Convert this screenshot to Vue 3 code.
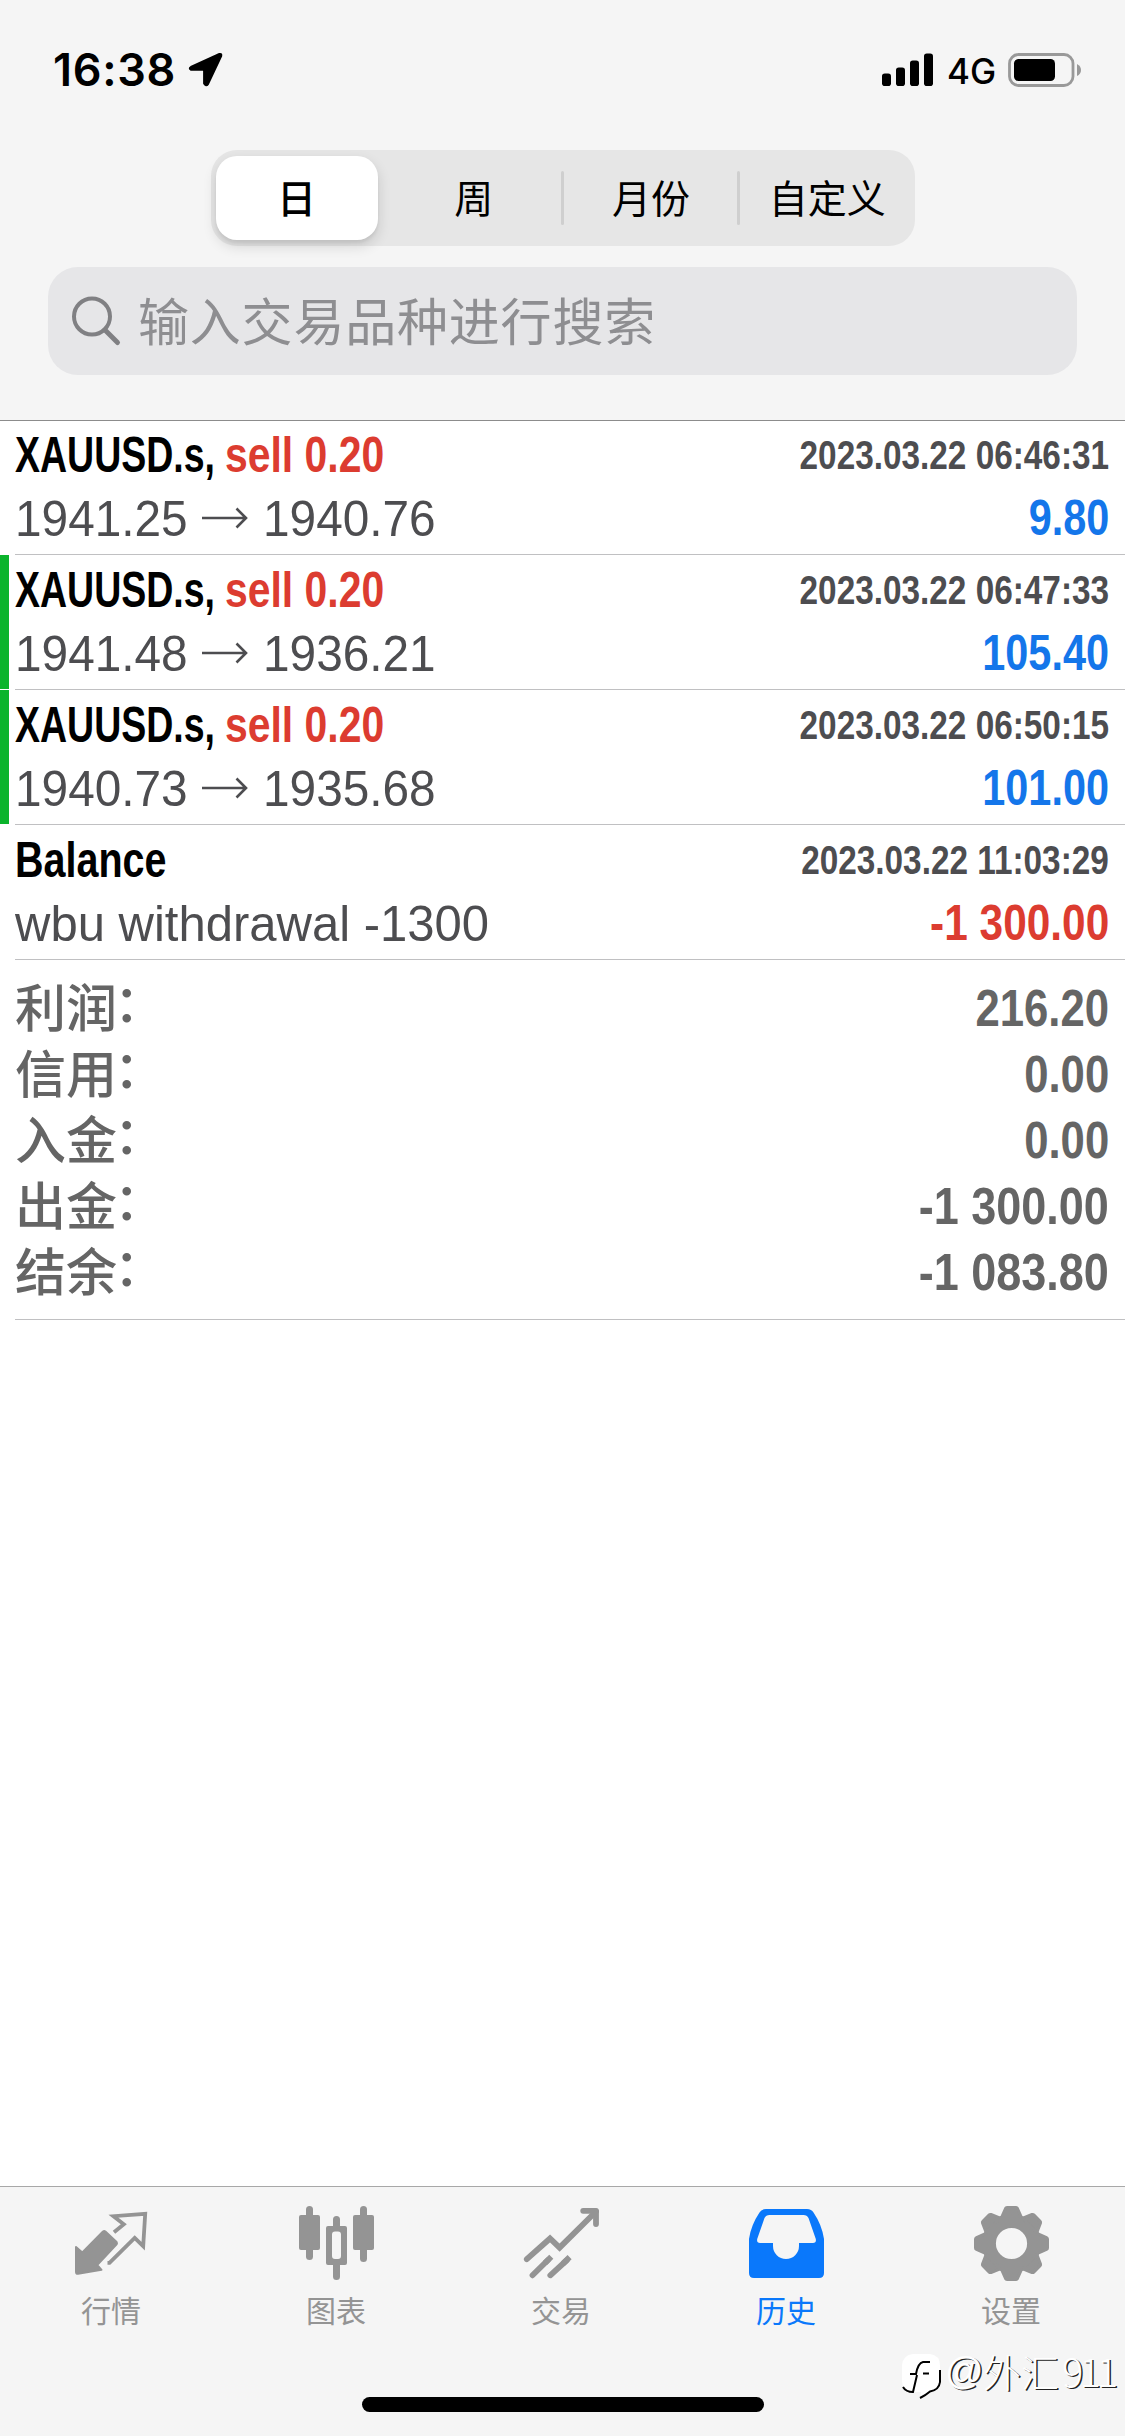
<script setup>
const periods = ['日', '周', '月份', '自定义']

const deals = [
  { name: 'XAUUSD.s,', side: 'sell 0.20', open: '1941.25', close: '1940.76', time: '2023.03.22 06:46:31', profit: '9.80' },
  { name: 'XAUUSD.s,', side: 'sell 0.20', open: '1941.48', close: '1936.21', time: '2023.03.22 06:47:33', profit: '105.40', marked: true },
  { name: 'XAUUSD.s,', side: 'sell 0.20', open: '1940.73', close: '1935.68', time: '2023.03.22 06:50:15', profit: '101.00', marked: true },
  { name: 'Balance', note: 'wbu withdrawal -1300', time: '2023.03.22 11:03:29', profit: '-1 300.00', loss: true },
]

const totals = [
  { label: '利润', sum: '216.20' },
  { label: '信用', sum: '0.00' },
  { label: '入金', sum: '0.00' },
  { label: '出金', sum: '-1 300.00', negative: true },
  { label: '结余', sum: '-1 083.80', negative: true },
]

const teeth = [0, 45, 90, 135, 180, 225, 270, 315]
</script>

<template>
  <div class="screen">
    <header class="top">
      <div class="status">
        <span class="clock">16:38</span>
        <svg class="location" width="36" height="36" viewBox="0 0 36 36">
          <path d="M31.5 2.2 L3 15.2 Q1 16.3 3 17.6 H16.3 V31.5 Q18 34.5 19.8 32 L33 4 Q33.6 1.6 31.5 2.2Z" fill="#000" stroke="#000" stroke-width="2.4" stroke-linejoin="round" />
        </svg>
        <span class="grow"></span>
        <svg width="52" height="34" viewBox="0 0 52 34">
          <rect x="0" y="20.5" width="9" height="12.5" rx="2.8" />
          <rect x="14" y="14.5" width="9" height="18.5" rx="2.8" />
          <rect x="28" y="7.5" width="9" height="25.5" rx="2.8" />
          <rect x="42" y="0.5" width="9" height="32.5" rx="2.8" />
        </svg>
        <span class="network">4G</span>
        <svg width="74" height="34" viewBox="0 0 74 34">
          <rect x="1.5" y="1.5" width="63.5" height="31" rx="9" fill="none" stroke="#999" stroke-width="2.8" />
          <rect x="6" y="6" width="41" height="22" rx="4.5" />
          <path d="M69 11 Q73 13 73 17 T69 23Z" fill="#999" />
        </svg>
      </div>

      <div class="segments">
        <div v-for="(p, i) in periods" :key="p" class="segment" :class="{ active: i === 0, ruled: i > 1 }">
          <span>{{ p }}</span>
        </div>
      </div>

      <div class="search">
        <svg width="52" height="52" viewBox="0 0 52 52" fill="none" stroke="#808083" stroke-linecap="round">
          <circle cx="20" cy="21.5" r="18" stroke-width="4" />
          <path d="M33 35 L45.500 47.500" stroke-width="5" />
        </svg>
        <span>输入交易品种进行搜索</span>
      </div>
    </header>

    <main class="list">
      <article v-for="d in deals" :key="d.time" class="deal" :class="{ marked: d.marked }">
        <div class="line first">
          <span class="name" :class="{ word: d.note }">{{ d.name }}</span>
          <span v-if="d.side" class="side">{{ d.side }}</span>
          <span class="grow"></span>
          <span class="time">{{ d.time }}</span>
        </div>
        <div class="line second">
          <span v-if="d.note" class="note">{{ d.note }}</span>
          <template v-else>
            <span class="price">{{ d.open }}</span>
            <svg class="arrow" width="48" height="24" viewBox="0 0 48 24" fill="none" stroke="#4d4d50" stroke-width="2.6">
              <path d="M1 12 H45 M35.5 2.5 L45 12 L35.5 21.5" />
            </svg>
            <span class="price">{{ d.close }}</span>
          </template>
          <span class="grow"></span>
          <span class="profit" :class="{ loss: d.loss }">{{ d.profit }}</span>
        </div>
      </article>

      <section class="totals">
        <div v-for="t in totals" :key="t.label" class="total">
          <span class="label">{{ t.label }}<span class="colon">：</span></span>
          <span class="sum" :class="{ negative: t.negative }">{{ t.sum }}</span>
        </div>
      </section>
    </main>

    <nav class="tabs">
      <div class="tab">
        <svg width="225" height="90" viewBox="0 0 225 90">
          <path d="M76 47 L82.3 52.5 L103 31.5 Q104.2 30.6 105.4 31.5 L116.6 42 Q117.4 43.2 116.6 44.4 L97.2 65 L101.5 69.8 L78 73.8 Q76 74 76 72Z" fill="currentColor" stroke="currentColor" stroke-width="2" stroke-linejoin="round" />
          <path d="M114 32.3 L123.8 24.2 L113.5 16.2 L145.2 13.8 L143.2 46.2 L134.7 37.8 L109.5 62.8 L107.5 62.8" fill="none" stroke="currentColor" stroke-width="3.8" />
        </svg>
        <span>行情</span>
      </div>
      <div class="tab">
        <svg width="225" height="90" viewBox="0 0 225 90" fill="currentColor">
          <rect x="74" y="15" width="21" height="35" rx="2" />
          <rect x="81" y="6" width="7" height="54" rx="3.5" />
          <path fill-rule="evenodd" d="M103 26 H120 Q122 26 122 28 V63 Q122 65 120 65 H103 Q101 65 101 63 V28 Q101 26 103 26Z M110 31.5 Q107 31.5 107 34.5 V56 Q107 59 110 59 H113 Q116 59 116 56 V34.5 Q116 31.5 113 31.5Z" />
          <path d="M108 27 V19.5 a3.5 3.5 0 0 1 7 0 V27Z M108 64 V76.5 a3.5 3.5 0 0 0 7 0 V64Z" />
          <rect x="128" y="15" width="21" height="35" rx="2" />
          <rect x="135" y="6" width="7" height="56" rx="3.5" />
        </svg>
        <span>图表</span>
      </div>
      <div class="tab">
        <svg width="225" height="90" viewBox="0 0 225 90" fill="none" stroke="currentColor" stroke-width="5.8">
          <path d="M76.8 59.2 L100 38.5 L109.6 47.6 L146 11.5" stroke-linecap="round" />
          <path d="M133.2 10.8 H146 V24" stroke-linecap="round" stroke-linejoin="round" />
          <path d="M82.5 75.3 L98 60 M100.3 75.3 L117 60" stroke-linecap="round" />
          <path d="M95 63 L101.3 56.7 M113 63.6 L119.6 57.2" />
        </svg>
        <span>交易</span>
      </div>
      <div class="tab current">
        <svg width="225" height="90" viewBox="0 0 225 90" fill="currentColor">
          <path fill-rule="evenodd" d="M91 9 H132 Q136.500 9 138.500 12.500 Q147 25 149 39 V73 Q149 78 144 78 H79 Q74 78 74 73 V39 Q76 25 84.500 12.500 Q86.500 9 91 9Z M94.500 15 Q91 15 89.500 18 L82.200 39 Q81.500 43 85 43 H98 V46 A13 13 0 0 0 124 46 V43 H138 Q141.500 43 140.800 39 L133.500 18 Q132 15 128.500 15Z" />
        </svg>
        <span>历史</span>
      </div>
      <div class="tab">
        <svg width="225" height="90" viewBox="0 0 225 90">
          <g transform="translate(111.500 43.500)" fill="currentColor" stroke="currentColor">
            <circle r="22.500" fill="none" stroke-width="13.800" />
            <path v-for="a in teeth" :key="a" d="M-10 -26 L-6 -35 Q-5.500 -36 -4.500 -36 H4.500 Q5.500 -36 6 -35 L10 -26Z" stroke-width="3" stroke-linejoin="round" :transform="`rotate(${a})`" />
          </g>
        </svg>
        <span>设置</span>
      </div>
      <div class="home"></div>
      <div class="credit">
        <svg width="44" height="48" viewBox="0 0 44 48">
          <path d="M12 1 H29 Q39 2 39 13 V29 Q39 38 30 38 L19 45 L20 39 H12 Q1 38 1 28 V12 Q2 2 12 1Z" fill="#fff" />
          <path d="M39 17 V29 Q38 37 29 38.500 Q25 42 19 45 M2 34 Q5 39 12 39 L16 22 M9 21 H15 Q17 10 22 9 H29 M22 20.500 H28" fill="none" stroke="#000" stroke-width="2" />
        </svg>
        <span class="at">@</span><span class="han">外汇</span><span class="num">911</span>
      </div>
    </nav>
  </div>
</template>

<style>
body {
  background: #fff;
}
</style>

<style scoped>
.screen {
  width: 1125px;
  height: 2436px;
  display: flex;
  flex-direction: column;
  background: #fff;
  font-family: "Liberation Sans", "Noto Sans CJK SC", sans-serif;
  overflow: hidden;
}
.grow {
  flex: 1;
}
.top {
  height: 420px;
  flex: none;
  background: #f5f5f5;
  box-shadow: 0 1px 0 #8c8c8c;
  z-index: 1;
}
.status {
  height: 150px;
  box-sizing: border-box;
  padding: 53px 43px 63px 53px;
  display: flex;
  align-items: center;
}
.clock {
  font: 600 45px/34px Inter, sans-serif;
  letter-spacing: 0.7px;
  width: 135px;
  white-space: nowrap;
}
.network {
  font: 500 35px/34px Inter, sans-serif;
  width: 61px;
  margin-left: 13px;
  padding-top: 2px;
  box-sizing: border-box;
}
.segments {
  width: 704px;
  height: 96px;
  margin-left: 210.5px;
  border-radius: 26px;
  background: #e6e6e6;
  display: flex;
}
.segment {
  flex: 1;
  display: flex;
  align-items: center;
  justify-content: center;
  font: 400 39px/60px "Noto Sans CJK SC", sans-serif;
  color: #000;
}
.segment span {
  flex: 1;
  text-align: center;
  margin-top: -4px;
}
.segment.ruled::before {
  content: "";
  width: 3px;
  height: 54px;
  margin-left: -1px;
  border-radius: 2px;
  background: #cfcfcf;
}
.segment.active {
  flex: none;
  width: 162px;
  height: 84px;
  margin: 6px 8px 6px 5px;
  border-radius: 21px;
  background: #fff;
  box-shadow: 0 6px 14px rgba(0, 0, 0, 0.14), 0 3px 3px rgba(0, 0, 0, 0.05);
  font-weight: 500;
}
.search {
  margin: 21px 48px 0 48px;
  height: 108px;
  border-radius: 30px;
  background: #e6e6e8;
  display: flex;
  align-items: center;
  padding-left: 24px;
  color: #8e8e91;
  font: 400 51px/76px "Noto Sans CJK SC", sans-serif;
  letter-spacing: 0.8px;
}
.search span {
  margin: -4px 0 0 14px;
}
.deal {
  height: 135px;
  box-sizing: border-box;
  padding: 4px 16px 0 15px;
  position: relative;
}
.deal::after,
.totals::after {
  content: "";
  position: absolute;
  left: 15px;
  right: 0;
  bottom: 0;
  height: 1px;
  background: #c0c0c2;
}
.deal.marked {
  background: linear-gradient(#0bb42c, #0bb42c) 0 0 / 9px 134px no-repeat;
}
.line {
  display: flex;
  align-items: center;
  white-space: nowrap;
}
.first {
  height: 62px;
}
.second {
  height: 64px;
}
.name,
.side,
.time,
.profit,
.sum {
  font-weight: 700;
  font-size: 50px;
}
.name {
  width: 210px;
  transform: scaleX(0.75);
  transform-origin: 0 50%;
}
.name.word {
  transform: scaleX(0.79);
}
.side {
  color: #dc3c30;
  transform: scaleX(0.818);
  transform-origin: 0 50%;
}
.time {
  font-size: 40.5px;
  color: #4d4d50;
  transform: scaleX(0.823);
  transform-origin: 100% 50%;
}
.price,
.note {
  font-size: 49.5px;
  color: #4d4d50;
  transform: scaleX(0.965);
  transform-origin: 0 50%;
}
.note {
  transform: scaleX(0.99);
}
.price {
  width: 173px;
}
.arrow {
  margin: 0 14px 0 13px;
}
.profit {
  color: #1476ea;
  transform: scaleX(0.828);
  transform-origin: 100% 50%;
}
.profit.loss {
  color: #dc3c30;
  transform: scaleX(0.848);
}
.totals {
  position: relative;
  height: 360px;
  box-sizing: border-box;
  padding: 15px 16px 0 15px;
  color: #656565;
}
.total {
  height: 66px;
  display: flex;
  align-items: center;
  justify-content: space-between;
}
.label {
  font-weight: 500;
  font-size: 51px;
  line-height: 62px;
  padding-top: 3px;
}
.colon {
  position: relative;
  left: -3px;
  top: -5px;
}
.sum {
  font-size: 52px;
  transform: scaleX(0.84);
  transform-origin: 100% 50%;
}
.sum.negative {
  transform: scaleX(0.865);
}
.tabs {
  margin-top: auto;
  height: 250px;
  box-sizing: border-box;
  border-top: 1px solid #a8a8a8;
  background: #f5f5f5;
  padding-top: 13px;
  display: grid;
  grid-template-columns: repeat(5, 225px);
  grid-template-rows: 197px 15px;
  position: relative;
}
.tab {
  display: flex;
  flex-direction: column;
  align-items: center;
  color: #949494;
  font: 400 30px/40px "Noto Sans CJK SC", sans-serif;
}
.tab span {
  margin: -1px 3px 0 0;
}
.tab.current {
  color: #0a78fb;
}
.home {
  grid-column: 1 / -1;
  justify-self: center;
  width: 402px;
  height: 15px;
  border-radius: 8px;
  background: #000;
}
.credit {
  position: absolute;
  left: 901px;
  top: 166px;
  display: flex;
  color: #fff;
  white-space: nowrap;
  text-shadow: 1.5px 1px 0 #222;
  line-height: 36px;
}
.at {
  font-size: 38px;
  width: 38px;
}
.han {
  font: 300 38px/35px "Noto Sans CJK SC", sans-serif;
  width: 79px;
}
.num {
  font: 300 40px/35px "Noto Sans CJK SC", sans-serif;
  letter-spacing: -4px;
}
</style>
